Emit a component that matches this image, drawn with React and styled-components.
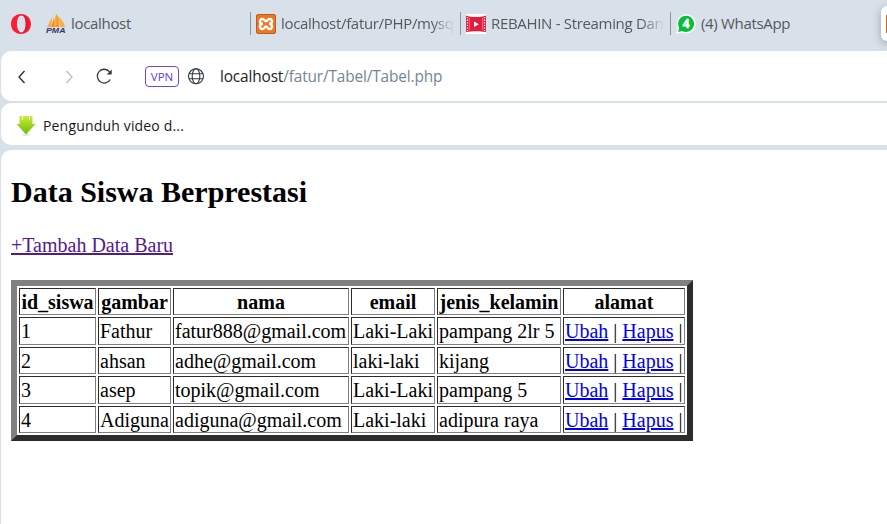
import React from "react";
import styled, { createGlobalStyle } from "styled-components";

const GlobalStyle = createGlobalStyle`
  * { box-sizing: border-box; }
  body { margin: 0; background: #d8e1e9; overflow: hidden; }
`;

const Browser = styled.div`
  width: 887px;
  height: 524px;
  overflow: hidden;
  background: #d8e1e9;
  font-family: "Open Sans", "Noto Sans", sans-serif;
  display: flex;
  flex-direction: column;
`;

const TabStrip = styled.div`
  height: 51px;
  flex: none;
  display: flex;
  align-items: flex-start;
  padding: 12px 0 0 10px;
`;

const OperaMenu = styled.div`
  width: 30px;
  height: 24px;
  padding-top: 2px;
  svg { display: block; }
`;

const Tab = styled.div`
  width: ${(p) => p.$width}px;
  height: 23px;
  flex: none;
  display: flex;
  align-items: center;
  gap: 5px;
  padding-left: ${(p) => (p.$divided ? 5 : 6)}px;
  border-left: ${(p) => (p.$divided ? "1px solid #8d9499" : "none")};
  svg { flex: none; display: block; }
`;

const TabTitle = styled.span`
  flex: 1;
  min-width: 0;
  overflow: hidden;
  white-space: nowrap;
  font-size: 15px;
  line-height: 23px;
  letter-spacing: -0.32px;
  color: #55595c;
  margin-right: ${(p) => (p.$fade ? 5 : 0)}px;
  mask-image: ${(p) => (p.$fade ? "linear-gradient(to right, #000 calc(100% - 24px), transparent)" : "none")};
`;

const PreviewCard = styled.div`
  margin: -6px -20px 0 auto;
  width: 26px;
  height: 35px;
  flex: none;
  padding: 9px 0 8px 5px;
  border-radius: 6px;
  background: #fff;
  box-shadow: 0 2px 8px rgba(60, 75, 90, 0.4);
`;

const PreviewIcon = styled.div`
  width: 18px;
  height: 18px;
  background: #c96a26;
`;

const AddressBar = styled.div`
  height: 50px;
  flex: none;
  margin-left: 1px;
  padding-left: 13px;
  border-radius: 10px 0 0 10px;
  background: #fff;
  display: flex;
  align-items: center;
`;

const NavButton = styled.div`
  width: ${(p) => p.$width}px;
  display: flex;
  svg { display: block; }
`;

const VpnBadge = styled.div`
  width: 34px;
  height: 21px;
  margin-right: 8px;
  border: 1px solid #6a45e8;
  border-radius: 4px;
  color: #6338ee;
  font-size: 11.5px;
  line-height: 20px;
  text-align: center;
`;

const Url = styled.div`
  margin: 2px 0 0 15px;
  font-size: 15.4px;
  line-height: 24px;
  letter-spacing: -0.14px;
  color: #748593;
  white-space: nowrap;
`;

const Host = styled.span`
  color: #1d2328;
`;

const BookmarksBar = styled.div`
  height: 42px;
  flex: none;
  margin: 2px 0 0 1px;
  padding: 2px 0 0 15px;
  border-radius: 10px 0 0 10px;
  background: #fff;
  display: flex;
  align-items: center;
  gap: 7px;
`;

const BookmarkTitle = styled.span`
  font-size: 14px;
  letter-spacing: 0.17px;
  color: #17191b;
  white-space: nowrap;
`;

const Page = styled.main`
  flex: 1;
  margin: 5px 0 0 1px;
  padding: 22px 0 0 10px;
  border-radius: 10px 0 0 0;
  background: #fff;
  color: #000;
  font-family: "Liberation Serif", "Times New Roman", serif;
  font-size: 20px;
`;

const Heading = styled.h2`
  margin: 0;
  height: 61px;
  padding-top: 3px;
  font-size: 30px;
  line-height: 34px;
`;

const AddLink = styled.a`
  display: block;
  width: max-content;
  height: 47px;
  line-height: 24px;
  color: #551a8b;
  text-decoration: underline;
`;

const Table = styled.table`
  width: 682px;
  table-layout: fixed;
  border: 6px solid;
  border-color: #808080 #2c2c2c #2c2c2c #808080;
  border-collapse: separate;
  border-spacing: 2px;
`;

const Col = styled.col`
  width: ${(p) => p.$width}px;
`;

const Row = styled.tr`
  height: ${(p) => p.$height}px;
`;

const Cell = styled.td`
  padding: 0 1px;
  border: 1px solid;
  border-color: #2c2c2c #808080 #808080 #2c2c2c;
  line-height: 22px;
  white-space: nowrap;
`;

const HeadCell = styled(Cell).attrs({ as: "th" })`
  font-weight: bold;
  text-align: center;
`;

const ActionLink = styled.a`
  color: #0000ee;
  text-decoration: underline;
`;

const OperaIcon = () => (
  <svg width="22" height="20" viewBox="0 0 22 20">
    <path fillRule="evenodd" fill="#fa1e37" d="M11 0C5.200 0 1 4.300 1 10s4.200 10 10 10 10-4.300 10-10S16.800 0 11 0Zm.500 1.600c2.600 0 4.100 3.500 4.100 8.400s-1.500 8.400-4.100 8.400S7 14.900 7 10s1.900-8.400 4.500-8.400Z" />
    <path fill="#c91431" opacity=".45" d="M11.500 1.600C13.500.8 17 2 18 5c1.300 3.300 1.200 7-.2 10.300-1.200 2.700-4.100 3.900-6.300 3.100 2.600 0 4.100-3.500 4.100-8.400s-1.500-8.400-4.100-8.400Z" />
  </svg>
);

const PmaIcon = () => (
  <svg width="20" height="20" viewBox="0 0 20 20">
    <path fill="#f8ae45" d="M1 13 6 3l-.500 10ZM6.500 13 10 0c3 3 4 8 3.500 13ZM12 2c4 3 6 7 7 11h-5c.200-4-.500-8-2-11Z" />
    <path fill="#f5921d" d="m5 13 3-9 .700 9ZM10 13c1-4 1-8 0-13 2 3 3 8 2.500 13Z" />
    <text x="0" y="19.300" textLength="19.500" lengthAdjust="spacingAndGlyphs" fill="#33346c" fontFamily="Liberation Sans, sans-serif" fontSize="7.400" fontWeight="bold" fontStyle="italic">PMA</text>
  </svg>
);

const XamppIcon = () => (
  <svg width="20" height="20" viewBox="0 0 20 20">
    <rect x=".5" y=".5" width="19" height="19" rx="1.500" fill="#f0771e" stroke="#bd5b24" />
    <path d="M7 9.700C3 10.300 3 5 6.500 5c2 0 2 2.200 3.500 2.200S11.500 5 13.500 5c3.500 0 3.500 5.300-.5 4.700M7 9.700c-4 0-4 5.300-.5 5.300 2 0 2-2.600 3.500-2.600s1.500 2.600 3.500 2.600c3.500 0 3.500-5.300-.5-5.300" fill="none" stroke="#fff" strokeWidth="2.400" strokeLinejoin="round" />
  </svg>
);

const FilmIcon = () => (
  <svg width="20" height="20" viewBox="0 0 20 20">
    <path fill="#fff" d="M0 0h20v20H0z" />
    <path fill="#e51c3c" d="M0 1.500c6 2 14 2 20 0v16.500c-6-1-14-1-20 0Z" />
    <path d="M1.500 3v14M18.500 3v14" stroke="#fff" strokeWidth="1.300" strokeDasharray="1.300 1.300" />
    <path d="M3.500 4v12M16.500 4v12" stroke="#f6a5b1" strokeWidth=".6" />
    <path fill="#fff" d="m8 7.500 4.800 2.700L8 13Z" />
  </svg>
);

const WhatsAppIcon = () => (
  <svg width="20" height="20" viewBox="0 0 20 20">
    <path fill="#fff" d="M10 .2a9.600 9.600 0 1 1-4 18.300L.3 19.800 1.700 14A9.600 9.600 0 0 1 10 .2Z" />
    <path fill="#08bd3a" d="M10.100 1.700a8.100 8.100 0 1 1-4 15.200l-4 1 1.100-4a8.100 8.100 0 0 1 6.900-12.200Z" />
    <text x="10.200" y="14.300" textAnchor="middle" fill="#fff" stroke="#fff" strokeWidth=".4" fontFamily="Open Sans, sans-serif" fontSize="12.500" fontWeight="bold">4</text>
  </svg>
);

const Chevron = ({ right }) => (
  <svg width="16" height="16" viewBox="0 0 16 16">
    <path d={right ? "m5.500 3 5.500 6-5.500 6" : "M10.500 3 5 9l5.500 6"} fill="none" stroke={right ? "#b9bcbe" : "#22282d"} strokeWidth="1.300" />
  </svg>
);

const ReloadIcon = () => (
  <svg width="18" height="18" viewBox="0 0 18 18">
    <path d="M15.300 12.500A6.900 6.900 0 1 1 14.600 4.800" fill="none" stroke="#30373c" strokeWidth="1.300" />
    <path d="M16.700 2.500v5h-5Z" fill="#30373c" />
  </svg>
);

const GlobeIcon = () => (
  <svg width="18" height="18" viewBox="0 0 18 18" fill="none" stroke="#30373c" strokeWidth="1.100">
    <circle cx="9" cy="9.300" r="7.500" />
    <ellipse cx="9" cy="9.300" rx="3.800" ry="7.500" />
    <path d="M2 6.700h14M2 11.700h14" />
  </svg>
);

const DownloadIcon = () => (
  <svg width="20" height="21" viewBox="0 0 20 21">
    <defs>
      <linearGradient id="arrowGreen" x2="0" y2="1">
        <stop stopColor="#c7ef35" />
        <stop offset="1" stopColor="#72b90d" />
      </linearGradient>
    </defs>
    <ellipse cx="10" cy="19.700" rx="4" ry="1" fill="#e3e5e1" />
    <path d="M3.500 1H6v4h1V1h6v4h1V1h2.500v8H19.500L10 19.500.500 9h3Z" fill="url(#arrowGreen)" />
  </svg>
);

const columns = [
  { name: "id_siswa", width: 77 },
  { name: "gambar", width: 73 },
  { name: "nama", width: 176 },
  { name: "email", width: 84 },
  { name: "jenis_kelamin", width: 124 },
  { name: "alamat", width: 122 },
];

const students = [
  { height: 28, values: ["1", "Fathur", "fatur888@gmail.com", "Laki-Laki", "pampang 2lr 5"] },
  { height: 27, values: ["2", "ahsan", "adhe@gmail.com", "laki-laki", "kijang"] },
  { height: 28, values: ["3", "asep", "topik@gmail.com", "Laki-Laki", "pampang 5"] },
  { height: 27, values: ["4", "Adiguna", "adiguna@gmail.com", "Laki-laki", "adipura raya"] },
];

export default function App() {
  return (
    <>
      <GlobalStyle />
      <Browser>
        <TabStrip>
          <OperaMenu><OperaIcon /></OperaMenu>
          <Tab $width={210}><PmaIcon /><TabTitle>localhost</TabTitle></Tab>
          <Tab $width={210} $divided><XamppIcon /><TabTitle $fade>localhost/fatur/PHP/mysql</TabTitle></Tab>
          <Tab $width={210} $divided><FilmIcon /><TabTitle $fade>REBAHIN - Streaming Dan</TabTitle></Tab>
          <Tab $width={180} $divided><WhatsAppIcon /><TabTitle>(4) WhatsApp</TabTitle></Tab>
          <PreviewCard><PreviewIcon /></PreviewCard>
        </TabStrip>
        <AddressBar>
          <NavButton $width={47}><Chevron /></NavButton>
          <NavButton $width={34}><Chevron right /></NavButton>
          <NavButton $width={50}><ReloadIcon /></NavButton>
          <VpnBadge>VPN</VpnBadge>
          <GlobeIcon />
          <Url><Host>localhost</Host>/fatur/Tabel/Tabel.php</Url>
        </AddressBar>
        <BookmarksBar>
          <DownloadIcon />
          <BookmarkTitle>Pengunduh video d...</BookmarkTitle>
        </BookmarksBar>
        <Page>
          <Heading>Data Siswa Berprestasi</Heading>
          <AddLink href="#">+Tambah Data Baru</AddLink>
          <Table>
            <colgroup>
              {columns.map((c) => <Col key={c.name} $width={c.width} />)}
            </colgroup>
            <tbody>
              <Row $height={27}>
                {columns.map((c) => <HeadCell key={c.name}>{c.name}</HeadCell>)}
              </Row>
              {students.map(({ height, values }) => (
                <Row key={values[0]} $height={height}>
                  {values.map((v, i) => <Cell key={i}>{v}</Cell>)}
                  <Cell>
                    <ActionLink href="#">Ubah</ActionLink> | <ActionLink href="#">Hapus</ActionLink> |
                  </Cell>
                </Row>
              ))}
            </tbody>
          </Table>
        </Page>
      </Browser>
    </>
  );
}
